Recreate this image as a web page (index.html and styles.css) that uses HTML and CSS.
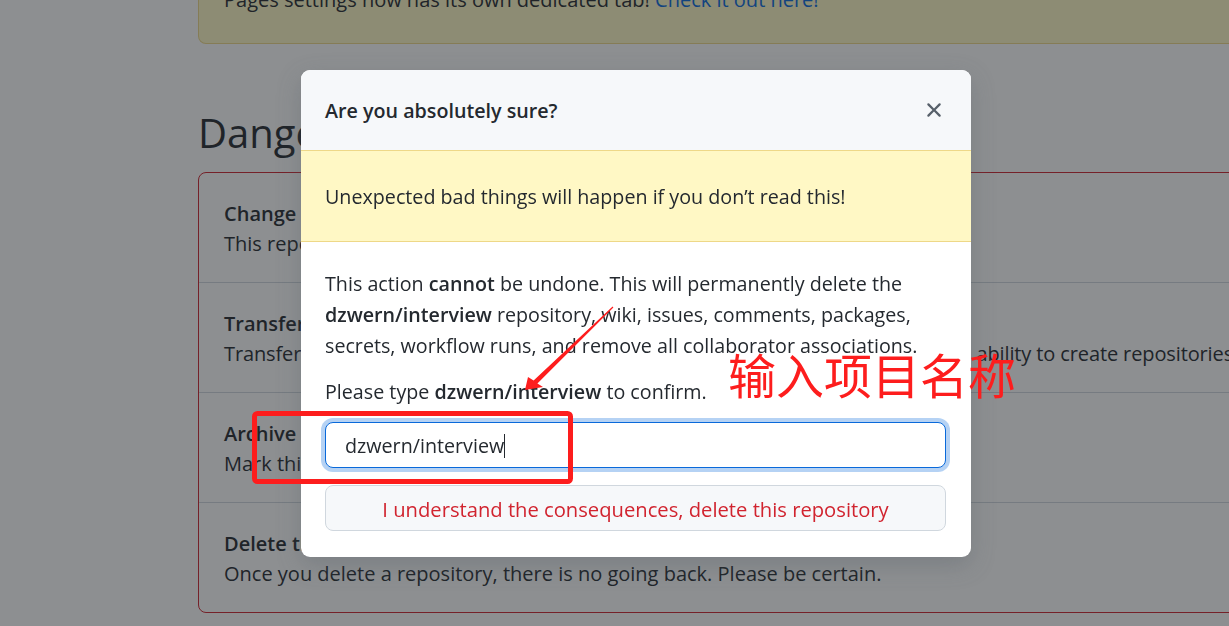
FILE: index.html
```html
<!DOCTYPE html>
<html lang="en">
<head>
<meta charset="utf-8">
<title>Delete repository</title>
<link rel="stylesheet" href="styles.css">
</head>
<body>
  <div class="page">
    <div class="notice">Pages settings now has its own dedicated tab! <a class="notice-link" href="#">Check it out here!</a></div>
    <h2 class="danger-title">Danger Zone</h2>
    <div class="danger-box">
      <div class="danger-row">
        <strong class="row-title">Change repository visibility</strong>
        <p class="row-desc">This repository is currently public.</p>
      </div>
      <div class="danger-row">
        <strong class="row-title">Transfer ownership</strong>
        <p class="row-desc row-desc-wide">Transfer this repository to another user or to an organization where you have the ability to create repositories.</p>
      </div>
      <div class="danger-row">
        <strong class="row-title">Archive this repository</strong>
        <p class="row-desc">Mark this repository as archived and read-only.</p>
      </div>
      <div class="danger-row">
        <strong class="row-title">Delete this repository</strong>
        <p class="row-desc">Once you delete a repository, there is no going back. Please be certain.</p>
      </div>
    </div>
  </div>

  <div class="overlay"></div>

  <div class="modal">
    <div class="modal-header">
      <h3 class="modal-title">Are you absolutely sure?</h3>
      <svg class="close-icon" viewBox="0 0 16 16" width="24" height="24" aria-hidden="true">
        <path fill="#57606a" d="M3.72 3.720a.75.75 0 011.06 0L8 6.94l3.22-3.22a.75.75 0 111.06 1.06L9.06 8l3.22 3.22a.75.75 0 11-1.06 1.060L8 9.06l-3.22 3.22a.75.75 0 01-1.06-1.06L6.94 8 3.72 4.78a.75.75 0 010-1.06z"/>
      </svg>
    </div>
    <div class="modal-flash">Unexpected bad things will happen if you don’t read this!</div>
    <div class="modal-body">
      <p class="modal-text">This action <strong>cannot</strong> be undone. This will permanently delete the <strong>dzwern/interview</strong> repository, wiki, issues, comments, packages, secrets, workflow runs, and remove all collaborator associations.</p>
      <p class="modal-text confirm-text">Please type <strong>dzwern/interview</strong> to confirm.</p>
      <div class="confirm-input"><span class="input-value">dzwern/interview</span><span class="caret"></span></div>
      <button class="delete-btn" type="button">I understand the consequences, delete this repository</button>
    </div>
  </div>

  <svg class="annotation" width="1229" height="626" viewBox="0 0 1229 626" aria-hidden="true">
    <rect x="254.5" y="413.5" width="316" height="68" rx="3" fill="none" stroke="#fd1d1d" stroke-width="5"/>
    <polygon fill="#fd1d1d" points="525,390 528,377 533.6,380.4 612.6,306.6 613.4,307.4 537.4,383.6 543,387"/>
  </svg>
  <div class="annotation-text">输入项目名称</div>
</body>
</html>
```

FILE: styles.css
```css
* { box-sizing: border-box; }

html, body {
  margin: 0;
  padding: 0;
  width: 1229px;
  height: 626px;
  overflow: hidden;
  background: #ffffff;
}

body {
  font-family: "Open Sans", "Noto Sans", sans-serif;
  color: #24292f;
  font-size: 20px;
}

.page {
  display: flex;
  flex-direction: column;
  padding-left: 198px;
  width: 1500px;
}

.notice {
  margin-top: -40px;
  background: #fff8c5;
  border: 1px solid rgba(212, 167, 44, 0.4);
  border-radius: 8px;
  padding: 24px 25px 28px;
  line-height: 30px;
  white-space: nowrap;
}

.notice-link {
  color: #0969da;
  text-decoration: none;
}

.danger-title {
  margin: 64px 0 14px 0;
  font-size: 40px;
  font-weight: 400;
  line-height: 50px;
}

.danger-box {
  border: 1px solid #cf222e;
  border-radius: 8px;
}

.danger-row {
  padding: 26px 25px 23px;
  line-height: 30px;
  white-space: nowrap;
}

.danger-row + .danger-row {
  border-top: 1px solid #d0d7de;
}

.row-title {
  display: block;
  font-weight: 600;
}

.row-desc {
  margin: 0;
}

.row-desc-wide {
  letter-spacing: -0.12px;
}

.overlay {
  position: fixed;
  inset: 0;
  background: rgba(27, 31, 36, 0.5);
}

.modal {
  position: fixed;
  left: 301px;
  top: 70px;
  width: 670px;
  background: #ffffff;
  border-radius: 9px;
  overflow: hidden;
  box-shadow: 0 8px 24px rgba(80, 90, 100, 0.3);
  font-size: 19.7px;
}

.modal-header {
  display: flex;
  align-items: center;
  justify-content: space-between;
  height: 80px;
  padding: 0 25px 0 24px;
  background: #f6f8fa;
}

.modal-title {
  margin: 0;
  font-size: 19.7px;
  font-weight: 600;
}

.close-icon {
  display: block;
}

.modal-flash {
  background: #fff8c5;
  border-top: 1px solid rgba(212, 167, 44, 0.4);
  border-bottom: 1px solid rgba(212, 167, 44, 0.4);
  padding: 31px 24px 29px;
  line-height: 30px;
}

.modal-body {
  display: flex;
  flex-direction: column;
  padding: 26px 25px 26px 24px;
}

.modal-text {
  margin: 0;
  line-height: 31px;
}

.modal-text strong {
  font-weight: 600;
}

.confirm-text {
  margin-top: 15px;
}

.confirm-input {
  display: flex;
  align-items: center;
  height: 46px;
  margin-top: 15px;
  padding: 2px 19px 0;
  border: 1px solid #0969da;
  border-radius: 8px;
  box-shadow: 0 0 0 4px rgba(9, 105, 218, 0.3);
  background: #ffffff;
}

.input-value {
  line-height: 26px;
}

.caret {
  width: 1px;
  height: 24px;
  background: #24292f;
}

.delete-btn {
  margin-top: 17px;
  height: 46px;
  width: 100%;
  padding: 2px 0 0;
  border: 1px solid #d0d7de;
  border-radius: 8px;
  background: #f6f8fa;
  color: #d1242f;
  font-family: "Open Sans", "Noto Sans", sans-serif;
  font-size: 20.2px;
  font-weight: 500;
}

.annotation {
  position: fixed;
  left: 0;
  top: 0;
}

.annotation-text {
  position: fixed;
  left: 728px;
  top: 345px;
  font-family: "Noto Sans CJK SC", sans-serif;
  font-size: 48px;
  line-height: 56px;
  color: #fd1d1d;
  white-space: nowrap;
}
```
